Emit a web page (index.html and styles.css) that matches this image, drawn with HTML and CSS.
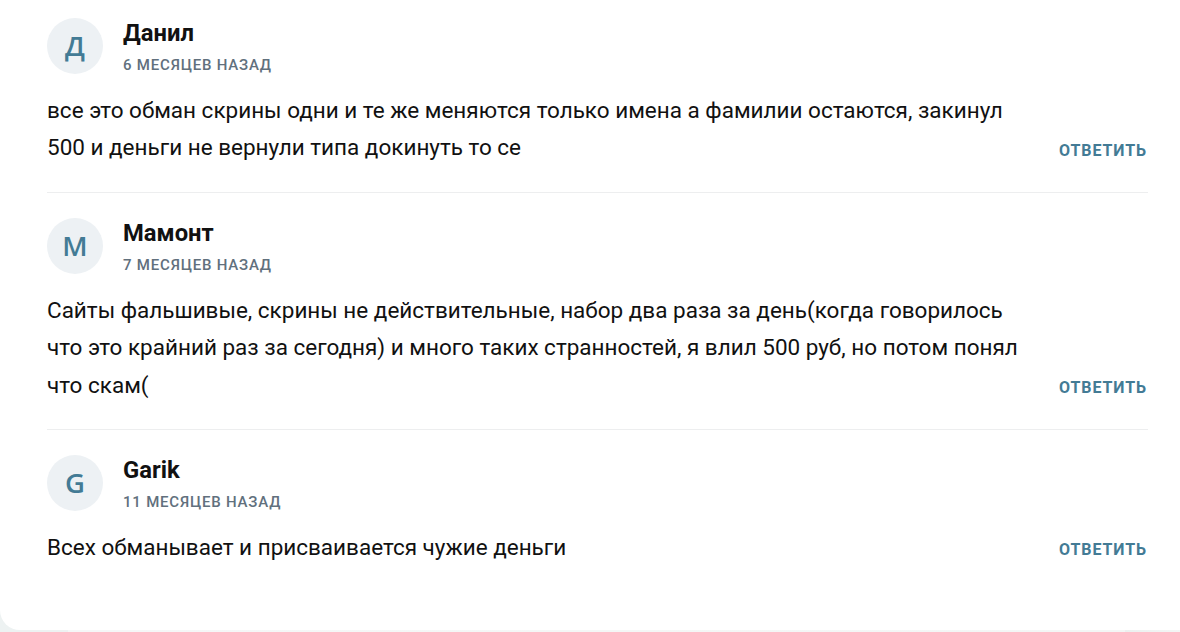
FILE: index.html
```html
<!DOCTYPE html>
<html lang="ru">
<head>
    <meta charset="UTF-8">
    <meta name="viewport" content="width=device-width, initial-scale=1.0">
    <title>Комментарии</title>
    <link rel="stylesheet" href="styles.css">
</head>
<body>

<div class="comments">
    <div class="comment">
        <div class="comment-header">
            <div class="avatar">Д</div>
            <div class="author">
                <div class="name">Данил</div>
                <div class="date">6 месяцев назад</div>
            </div>
        </div>
        <div class="comment-body">
            <p>все это обман скрины одни и те же меняются только имена а фамилии остаются, закинул 500 и деньги не вернули типа докинуть то се</p>
            <button class="reply">Ответить</button>
        </div>
    </div>

    <div class="comment">
        <div class="comment-header">
            <div class="avatar">М</div>
            <div class="author">
                <div class="name">Мамонт</div>
                <div class="date">7 месяцев назад</div>
            </div>
        </div>
        <div class="comment-body">
            <p>Сайты фальшивые, скрины не действительные, набор два раза за день(когда говорилось что это крайний раз за сегодня) и много таких странностей, я влил 500 руб, но потом понял что скам(</p>
            <button class="reply">Ответить</button>
        </div>
    </div>

    <div class="comment">
        <div class="comment-header">
            <div class="avatar">G</div>
            <div class="author">
                <div class="name">Garik</div>
                <div class="date">11 месяцев назад</div>
            </div>
        </div>
        <div class="comment-body">
            <p>Всех обманывает и присваивается чужие деньги</p>
            <button class="reply">Ответить</button>
        </div>
    </div>
</div>

</body>
</html>
```
FILE: styles.css
```css
* {
    box-sizing: border-box;
}

body {
    margin: 0;
    height: 632px;
    overflow: hidden;
    background: linear-gradient(to right, #edf2f2 68px, #f5f7f7 68px, #f3f6f5 1125px, #ebf0ef 1125px, #f3f6f5);
    font-family: Roboto, sans-serif;
    color: #111;
}

/* Comments panel */
.comments {
    height: 630px;
    padding: 0 32px 0 47px;
    background-color: #fff;
    border-radius: 0 0 0 20px;
}

.comment {
    padding: 18px 0 25.2px;
    border-bottom: 1px solid #edeeef;
}

.comment + .comment {
    padding-top: 24.9px;
}

.comment:last-child {
    border-bottom: none;
}

.comment-header {
    display: flex;
    gap: 20px;
    height: 56px;
}

.avatar {
    width: 56px;
    height: 56px;
    border-radius: 50%;
    background-color: #edf1f4;
    color: #437b95;
    font-family: "Open Sans", sans-serif;
    font-size: 27.5px;
    font-weight: 600;
    line-height: 55px;
    text-align: center;
}

.name {
    margin-top: 1px;
    font-size: 23.8px;
    font-weight: 700;
    line-height: 28px;
}

.date {
    margin-top: 8px;
    color: #61707d;
    font-size: 15px;
    font-weight: 500;
    line-height: 20px;
    letter-spacing: 0.8px;
    text-transform: uppercase;
}

/* Text and reply button */
.comment-body {
    display: flex;
    justify-content: space-between;
    align-items: flex-end;
    margin-top: 18px;
}

.comment-body p {
    width: 980px;
    margin: 0;
    font-size: 22.49px;
    line-height: 37.4px;
}

.reply {
    margin: 0 1px 6.25px 0;
    padding: 0;
    border: none;
    background: none;
    color: #437b95;
    font-family: inherit;
    font-size: 16px;
    font-weight: 700;
    line-height: 20px;
    letter-spacing: 0.9px;
    text-transform: uppercase;
    cursor: pointer;
}
```
